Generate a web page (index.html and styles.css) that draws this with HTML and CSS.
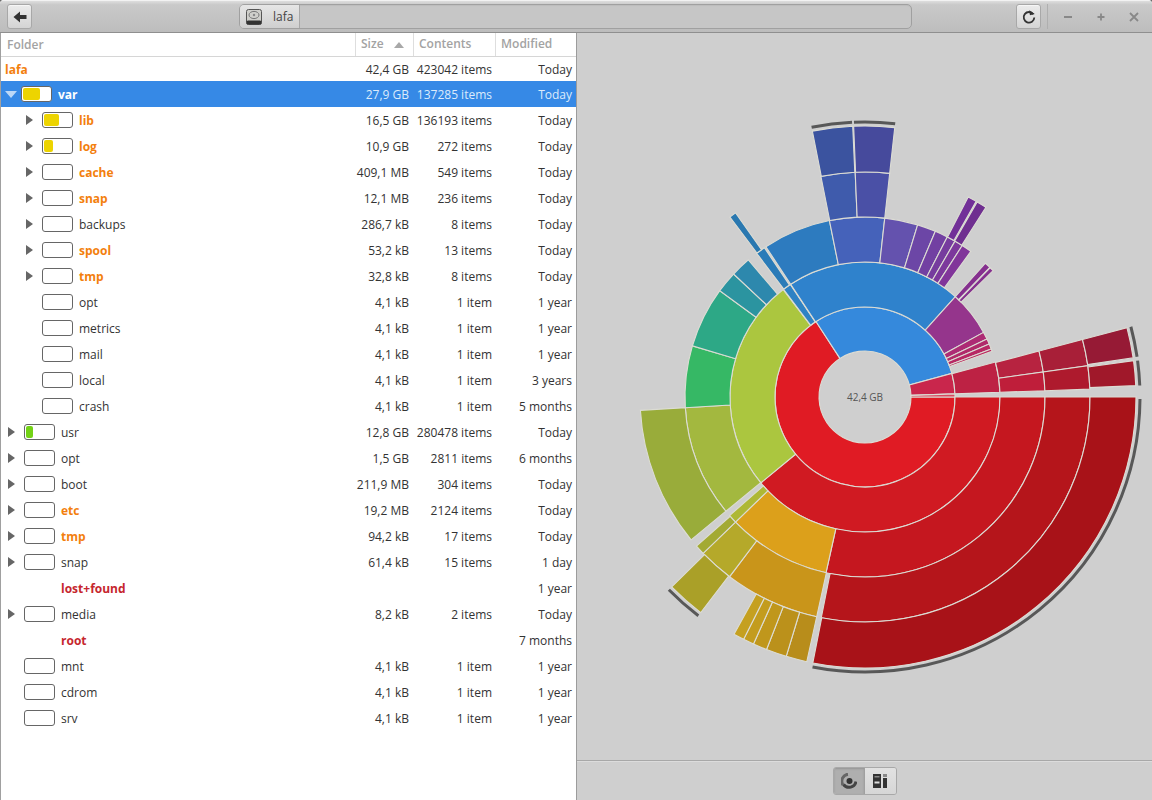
FILE: index.html
```html
<!DOCTYPE html>
<html lang="en">
<head>
<meta charset="utf-8">
<title>Disk Usage Analyzer</title>
<link rel="stylesheet" href="styles.css">
</head>
<body>
<div class="window">
  <header class="headerbar">
    <button class="btn back" aria-label="Back">
      <svg width="16" height="16" viewBox="0 0 16 16"><path d="M1.5 8 8 2.5V6h6.5v4H8v3.5z" fill="#333"/></svg>
    </button>
    <div class="pathbar">
      <div class="crumb">
        <svg class="disk" width="18" height="18" viewBox="0 0 18 18">
          <rect x="1.5" y="1.5" width="15" height="15" rx="2" fill="#cfcfcb" stroke="#555"/>
          <rect x="1.5" y="12.5" width="15" height="4" rx="1.5" fill="#333"/>
          <ellipse cx="9" cy="7" rx="5" ry="3.6" fill="none" stroke="#777"/>
          <circle cx="9" cy="7" r="1.2" fill="#888"/>
        </svg>
        <span class="crumb-label">lafa</span>
      </div>
      <div class="path-fill"></div>
    </div>
    <button class="btn reload" aria-label="Reload">
      <svg width="16" height="16" viewBox="0 0 16 16"><path d="M12.3 5.2A5.3 5.3 0 1 0 13.3 8.5" fill="none" stroke="#333" stroke-width="1.8"/><path d="M8.6 1 13.6 5.6 8.6 6.2z" fill="#333" transform="rotate(-8 10 4)"/></svg>
    </button>
    <span class="vsep"></span>
    <div class="winctl">
      <svg width="12" height="12" viewBox="0 0 12 12"><path d="M2 6h8" stroke="#888" stroke-width="1.8"/></svg>
      <svg width="12" height="12" viewBox="0 0 12 12"><path d="M2.5 6h7M6 2.5v7" stroke="#888" stroke-width="1.8"/></svg>
      <svg width="12" height="12" viewBox="0 0 12 12"><path d="m2 2 8 8M10 2l-8 8" stroke="#888" stroke-width="1.8"/></svg>
    </div>
  </header>
  <main class="content">
    <section class="tree">
      <div class="thead">
        <div class="th c-name">Folder</div>
        <div class="th c-size">Size<span class="sort"></span></div>
        <div class="th c-items">Contents</div>
        <div class="th c-mod">Modified</div>
      </div>
      <div class="row root"><div class="c-name name hot">lafa</div><div class="c-size">42,4 GB</div><div class="c-items">423042 items</div><div class="c-mod">Today</div></div>
      <div class="row sel"><div class="c-name"><i class="exp open"></i><span class="cap"><b class="y w17"></b></span><span class="name bold">var</span></div><div class="c-size">27,9 GB</div><div class="c-items">137285 items</div><div class="c-mod">Today</div></div>
      <div class="row d2"><div class="c-name"><i class="exp"></i><span class="cap"><b class="y w15"></b></span><span class="name hot">lib</span></div><div class="c-size">16,5 GB</div><div class="c-items">136193 items</div><div class="c-mod">Today</div></div>
      <div class="row d2"><div class="c-name"><i class="exp"></i><span class="cap"><b class="y w9"></b></span><span class="name hot">log</span></div><div class="c-size">10,9 GB</div><div class="c-items">272 items</div><div class="c-mod">Today</div></div>
      <div class="row d2"><div class="c-name"><i class="exp"></i><span class="cap"></span><span class="name hot">cache</span></div><div class="c-size">409,1 MB</div><div class="c-items">549 items</div><div class="c-mod">Today</div></div>
      <div class="row d2"><div class="c-name"><i class="exp"></i><span class="cap"></span><span class="name hot">snap</span></div><div class="c-size">12,1 MB</div><div class="c-items">236 items</div><div class="c-mod">Today</div></div>
      <div class="row d2"><div class="c-name"><i class="exp"></i><span class="cap"></span><span class="name">backups</span></div><div class="c-size">286,7 kB</div><div class="c-items">8 items</div><div class="c-mod">Today</div></div>
      <div class="row d2"><div class="c-name"><i class="exp"></i><span class="cap"></span><span class="name hot">spool</span></div><div class="c-size">53,2 kB</div><div class="c-items">13 items</div><div class="c-mod">Today</div></div>
      <div class="row d2"><div class="c-name"><i class="exp"></i><span class="cap"></span><span class="name hot">tmp</span></div><div class="c-size">32,8 kB</div><div class="c-items">8 items</div><div class="c-mod">Today</div></div>
      <div class="row d2"><div class="c-name"><i class="exp none"></i><span class="cap"></span><span class="name">opt</span></div><div class="c-size">4,1 kB</div><div class="c-items">1 item</div><div class="c-mod">1 year</div></div>
      <div class="row d2"><div class="c-name"><i class="exp none"></i><span class="cap"></span><span class="name">metrics</span></div><div class="c-size">4,1 kB</div><div class="c-items">1 item</div><div class="c-mod">1 year</div></div>
      <div class="row d2"><div class="c-name"><i class="exp none"></i><span class="cap"></span><span class="name">mail</span></div><div class="c-size">4,1 kB</div><div class="c-items">1 item</div><div class="c-mod">1 year</div></div>
      <div class="row d2"><div class="c-name"><i class="exp none"></i><span class="cap"></span><span class="name">local</span></div><div class="c-size">4,1 kB</div><div class="c-items">1 item</div><div class="c-mod">3 years</div></div>
      <div class="row d2"><div class="c-name"><i class="exp none"></i><span class="cap"></span><span class="name">crash</span></div><div class="c-size">4,1 kB</div><div class="c-items">1 item</div><div class="c-mod">5 months</div></div>
      <div class="row"><div class="c-name"><i class="exp"></i><span class="cap"><b class="g w7"></b></span><span class="name">usr</span></div><div class="c-size">12,8 GB</div><div class="c-items">280478 items</div><div class="c-mod">Today</div></div>
      <div class="row"><div class="c-name"><i class="exp"></i><span class="cap"></span><span class="name">opt</span></div><div class="c-size">1,5 GB</div><div class="c-items">2811 items</div><div class="c-mod">6 months</div></div>
      <div class="row"><div class="c-name"><i class="exp"></i><span class="cap"></span><span class="name">boot</span></div><div class="c-size">211,9 MB</div><div class="c-items">304 items</div><div class="c-mod">Today</div></div>
      <div class="row"><div class="c-name"><i class="exp"></i><span class="cap"></span><span class="name hot">etc</span></div><div class="c-size">19,2 MB</div><div class="c-items">2124 items</div><div class="c-mod">Today</div></div>
      <div class="row"><div class="c-name"><i class="exp"></i><span class="cap"></span><span class="name hot">tmp</span></div><div class="c-size">94,2 kB</div><div class="c-items">17 items</div><div class="c-mod">Today</div></div>
      <div class="row"><div class="c-name"><i class="exp"></i><span class="cap"></span><span class="name">snap</span></div><div class="c-size">61,4 kB</div><div class="c-items">15 items</div><div class="c-mod">1 day</div></div>
      <div class="row"><div class="c-name"><i class="exp none"></i><span class="cap none"></span><span class="name err">lost+found</span></div><div class="c-size"></div><div class="c-items"></div><div class="c-mod">1 year</div></div>
      <div class="row"><div class="c-name"><i class="exp"></i><span class="cap"></span><span class="name">media</span></div><div class="c-size">8,2 kB</div><div class="c-items">2 items</div><div class="c-mod">Today</div></div>
      <div class="row"><div class="c-name"><i class="exp none"></i><span class="cap none"></span><span class="name err">root</span></div><div class="c-size"></div><div class="c-items"></div><div class="c-mod">7 months</div></div>
      <div class="row"><div class="c-name"><i class="exp none"></i><span class="cap"></span><span class="name">mnt</span></div><div class="c-size">4,1 kB</div><div class="c-items">1 item</div><div class="c-mod">1 year</div></div>
      <div class="row"><div class="c-name"><i class="exp none"></i><span class="cap"></span><span class="name">cdrom</span></div><div class="c-size">4,1 kB</div><div class="c-items">1 item</div><div class="c-mod">1 year</div></div>
      <div class="row"><div class="c-name"><i class="exp none"></i><span class="cap"></span><span class="name">srv</span></div><div class="c-size">4,1 kB</div><div class="c-items">1 item</div><div class="c-mod">1 year</div></div>
    </section>
    <section class="pane">
      <div class="chart-area">
        <svg id="chart" class="chart" width="560" height="560" viewBox="-280 -280 560 560">
          <text class="center-label" x="0" y="3.5" text-anchor="middle">42,4 GB</text>
        </svg>
      </div>
      <footer class="viewbar">
        <div class="switch">
          <button class="seg active" aria-label="Rings chart">
            <svg width="16" height="16" viewBox="0 0 16 16"><path d="M7 1.2A7 7 0 0 0 2 12" fill="none" stroke="#666" stroke-width="3"/><path d="M2.5 11.5A7 7 0 0 0 15 8.5" fill="none" stroke="#444" stroke-width="3"/><circle cx="8.5" cy="8" r="3" fill="#333"/></svg>
          </button>
          <button class="seg" aria-label="Treemap chart">
            <svg width="16" height="16" viewBox="0 0 16 16"><rect x="1" y="1" width="8" height="14" fill="#333"/><rect x="2.5" y="8.5" width="5" height="2" fill="#ddd"/><rect x="2.5" y="3" width="5" height="1.5" fill="#888"/><rect x="11" y="1" width="4" height="3" fill="#888"/><rect x="11" y="5" width="4" height="10" fill="#333"/></svg>
          </button>
        </div>
      </footer>
    </section>
  </main>
</div>
<script src="chart.js"></script>
</body>
</html>
```
FILE: styles.css
```css
* { box-sizing: border-box; }
html, body { margin: 0; height: 100%; background: #6b6b6b; }
body { font: 12px "Open Sans", "Noto Sans", sans-serif; color: #333; overflow: hidden; }
.window { width: 1152px; height: 800px; display: flex; flex-direction: column; border-radius: 4px 4px 0 0; overflow: hidden; background: #fff; }

.headerbar { height: 33px; flex: none; display: flex; align-items: center; padding: 0 7px; background: linear-gradient(#dedede, #c9c9c9 12%, #bdbdbd); border-top: 1px solid #f2f2f2; border-bottom: 1px solid #8f8f8f; }
.btn { width: 25px; height: 25px; padding: 0; display: flex; align-items: center; justify-content: center; border: 1px solid #a8a8a8; border-radius: 3px; background: linear-gradient(#ececec, #d4d4d4); box-shadow: inset 0 1px #f6f6f6; }
.pathbar { margin-left: 207px; width: 673px; height: 25px; display: flex; border: 1px solid #a0a0a0; border-radius: 5px; box-shadow: inset 0 1px 1px rgba(0,0,0,.05); background: #c6c6c6; overflow: hidden; }
.crumb { width: 60px; display: flex; align-items: center; padding-left: 5px; border-right: 1px solid #a8a8a8; background: linear-gradient(#e6e6e6, #cfcfcf); }
.crumb-label { margin-left: 10px; color: #444; }
.path-fill { flex: 1; }
.reload { margin-left: 104px; }
.vsep { width: 1px; height: 25px; margin-left: 6px; background: #afafaf; }
.winctl { margin-left: 14px; width: 78px; display: flex; justify-content: space-between; }

.content { flex: 1; display: flex; min-height: 0; }
.tree { width: 577px; flex: none; background: #fff; border-left: 1px solid #a0a0a0; border-right: 1px solid #9c9c9c; }
.thead { height: 24px; display: flex; border-bottom: 1px solid #d6d6d6; }
.th { font-weight: 600; color: #a3a3a3; line-height: 22px; border-left: 1px solid #dedede; padding-left: 5px; }
.th.c-name { border-left: 0; padding-left: 6px; }
.c-name { width: 354px; flex: none; display: flex; align-items: center; }
.c-size { width: 58px; flex: none; text-align: right; padding-right: 4px; }
.c-items { width: 82px; flex: none; text-align: right; padding-right: 3px; }
.c-mod { width: 81px; flex: none; text-align: right; padding-right: 4px; }
.th.c-size, .th.c-items, .th.c-mod { text-align: left; }
.th.c-size { position: relative; }
.sort { position: absolute; right: 9px; top: 9px; border: 5px solid transparent; border-top: 0; border-bottom: 6px solid #a8a8a8; }

.row { height: 26px; display: flex; align-items: center; }
.row.root { height: 24px; }
.root .name { padding-left: 4px; }
.row.sel { background: #3689e6; color: #fff; }
.row.sel .c-size, .row.sel .c-items, .row.sel .c-mod { color: #dcebfb; }
.row.d2 .c-name { padding-left: 18px; }

.exp { width: 0; height: 0; margin-left: 7px; border-left: 7px solid #666; border-top: 5px solid transparent; border-bottom: 5px solid transparent; }
.exp.open { margin-left: 4px; border-top: 7px solid #bcd8f7; border-bottom: 0; border-left: 6px solid transparent; border-right: 6px solid transparent; margin-right: -5px; }
.exp.none { visibility: hidden; }
.cap { width: 31px; height: 16px; margin-left: 9px; padding: 1px; display: block; border: 1px solid #666; border-radius: 3px; background: #fff; }
.cap.none { visibility: hidden; }
.cap b { display: block; height: 100%; border-radius: 2px; }
.cap .y { background: #edd400; }
.cap .g { background: #73d216; }
.w17 { width: 17px; }
.w15 { width: 15px; }
.w9 { width: 9px; }
.w7 { width: 7px; }
.name { margin-left: 6px; color: #333; }
.root .name { margin-left: 0; }
.bold { font-weight: 700; color: #fff; }
.hot { font-weight: 700; color: #f37f0e; }
.err { font-weight: 700; color: #c6262e; }

.pane { flex: 1; display: flex; flex-direction: column; background: #cfcfcf; min-width: 0; }
.chart-area { flex: 1; display: flex; align-items: center; justify-content: center; min-height: 0; }
.chart { display: block; }
.center-label { font: 10px "Open Sans", sans-serif; fill: #555; }
.viewbar { height: 40px; flex: none; display: flex; align-items: center; justify-content: center; border-top: 1px solid #a8a8a8; box-shadow: inset 0 1px #dcdcdc; padding-top: 1px; }
.switch { display: flex; border: 1px solid #a8a8a8; border-radius: 3px; overflow: hidden; }
.seg { width: 31px; height: 26px; padding: 0; display: flex; align-items: center; justify-content: center; border: 0; background: linear-gradient(#e2e2e2, #d6d6d6); }
.seg.active { background: #afafaf; border-right: 1px solid #a0a0a0; box-shadow: inset 0 1px 2px rgba(0,0,0,.15); }
```
FILE: chart.js
```js
var R = [46, 90, 135, 180, 225, 271];
// ring index, start angle, end angle (degrees clockwise from east), colour
var SEGMENTS = [
  [0, 0, 237, "#e01b24"], [0, 237, 344.8, "#3589dc"], [0, 344.8, 358, "#c9264c"], [0, 358, 360, "#d8485f"],

  [1, 0, 140.5, "#d01a22"], [1, 140.5, 232.7, "#abc63f"], [1, 232.9, 236.4, "#2f82c4"],
  [1, 236.6, 312, "#2f82cc"], [1, 312, 331.4, "#95358c"], [1, 331.4, 334.6, "#ad2b74"],
  [1, 334.6, 336.9, "#b02a6a"], [1, 336.9, 339.2, "#b72864"], [1, 339.2, 340.2, "#bb2860"],
  [1, 345, 358, "#bd2244"],

  [2, 0, 102.5, "#c5171f"], [2, 102.5, 136, "#dca01b"], [2, 136, 138.8, "#aeb835"],
  [2, 140.6, 176.6, "#a3b83f"], [2, 176.6, 196.5, "#36b865"], [2, 196.5, 216.2, "#2da886"],
  [2, 216.2, 223.1, "#2b94a0"], [2, 223.1, 229.6, "#2d88ad"], [2, 233, 236, "#2a7bb8"],
  [2, 236.6, 258.6, "#2d7bbf"], [2, 258.6, 276.3, "#4562ba"], [2, 276.3, 287, "#6452ae"],
  [2, 287, 293, "#6c46a6"], [2, 293, 297.2, "#7240a2"], [2, 297.2, 300, "#763c9e"],
  [2, 300, 302.7, "#7c389c"], [2, 302.7, 306, "#81359a"], [2, 312, 313.9, "#85308f"],
  [2, 314.1, 315.4, "#85308f"], [2, 345.2, 352, "#b72340"], [2, 352, 358, "#bf1e3a"],

  [3, 0, 101.2, "#b5151b"], [3, 102.4, 127, "#c9951a"], [3, 127, 136, "#b5a92a"],
  [3, 136, 138.5, "#a3aa33"], [3, 140.6, 176.6, "#99ac3a"], [3, 233.1, 234.9, "#2a78b0"],
  [3, 258.7, 267.5, "#3f5bac"], [3, 267.5, 276.3, "#4a50a6"], [3, 297.3, 299.6, "#723098"],
  [3, 299.9, 302.5, "#6f2f90"], [3, 345.2, 352, "#a81f38"], [3, 352, 358, "#ae1a2d"],

  [4, 0, 101.1, "#a81218"], [4, 102.4, 106.9, "#b88d1b"], [4, 106.9, 111.3, "#bb911b"],
  [4, 111.3, 114.3, "#c0971c"], [4, 114.3, 116.6, "#c39c1e"], [4, 116.6, 118.9, "#c5a020"],
  [4, 127.3, 135.5, "#aaa028"], [4, 258.8, 267.4, "#3b539f"], [4, 267.6, 276.3, "#464a9c"],
  [4, 345.2, 351.7, "#961a35"], [4, 352.3, 357.6, "#a0182a"]
];
// grey caps marking folders that go deeper than the chart shows
var CAPS = [[0.4, 101], [127.3, 135.5], [258.8, 267.3], [267.7, 276.3], [345.2, 351.6], [352.4, 357.6]];

function pt(r, deg) {
  var a = deg * Math.PI / 180;
  return (r * Math.cos(a)).toFixed(2) + " " + (r * Math.sin(a)).toFixed(2);
}
function sector(r0, r1, a0, a1) {
  var large = a1 - a0 > 180 ? 1 : 0;
  return "M" + pt(r0, a0) + "A" + r0 + " " + r0 + " 0 " + large + " 1 " + pt(r0, a1) +
    "L" + pt(r1, a1) + "A" + r1 + " " + r1 + " 0 " + large + " 0 " + pt(r1, a0) + "Z";
}
function add(svg, d, attrs) {
  var p = document.createElementNS("http://www.w3.org/2000/svg", "path");
  p.setAttribute("d", d);
  for (var k in attrs) p.setAttribute(k, attrs[k]);
  svg.insertBefore(p, svg.firstChild);
}
var svg = document.getElementById("chart");
CAPS.forEach(function (c) {
  var large = c[1] - c[0] > 180 ? 1 : 0;
  add(svg, "M" + pt(275, c[0]) + "A275 275 0 " + large + " 1 " + pt(275, c[1]), { fill: "none", stroke: "#585858", "stroke-width": 3 });
});
SEGMENTS.slice().reverse().forEach(function (s) {
  add(svg, sector(R[s[0]], R[s[0] + 1], s[1], s[2]), { fill: s[3], stroke: "#dcdcd4", "stroke-width": 1.1 });
});
```
